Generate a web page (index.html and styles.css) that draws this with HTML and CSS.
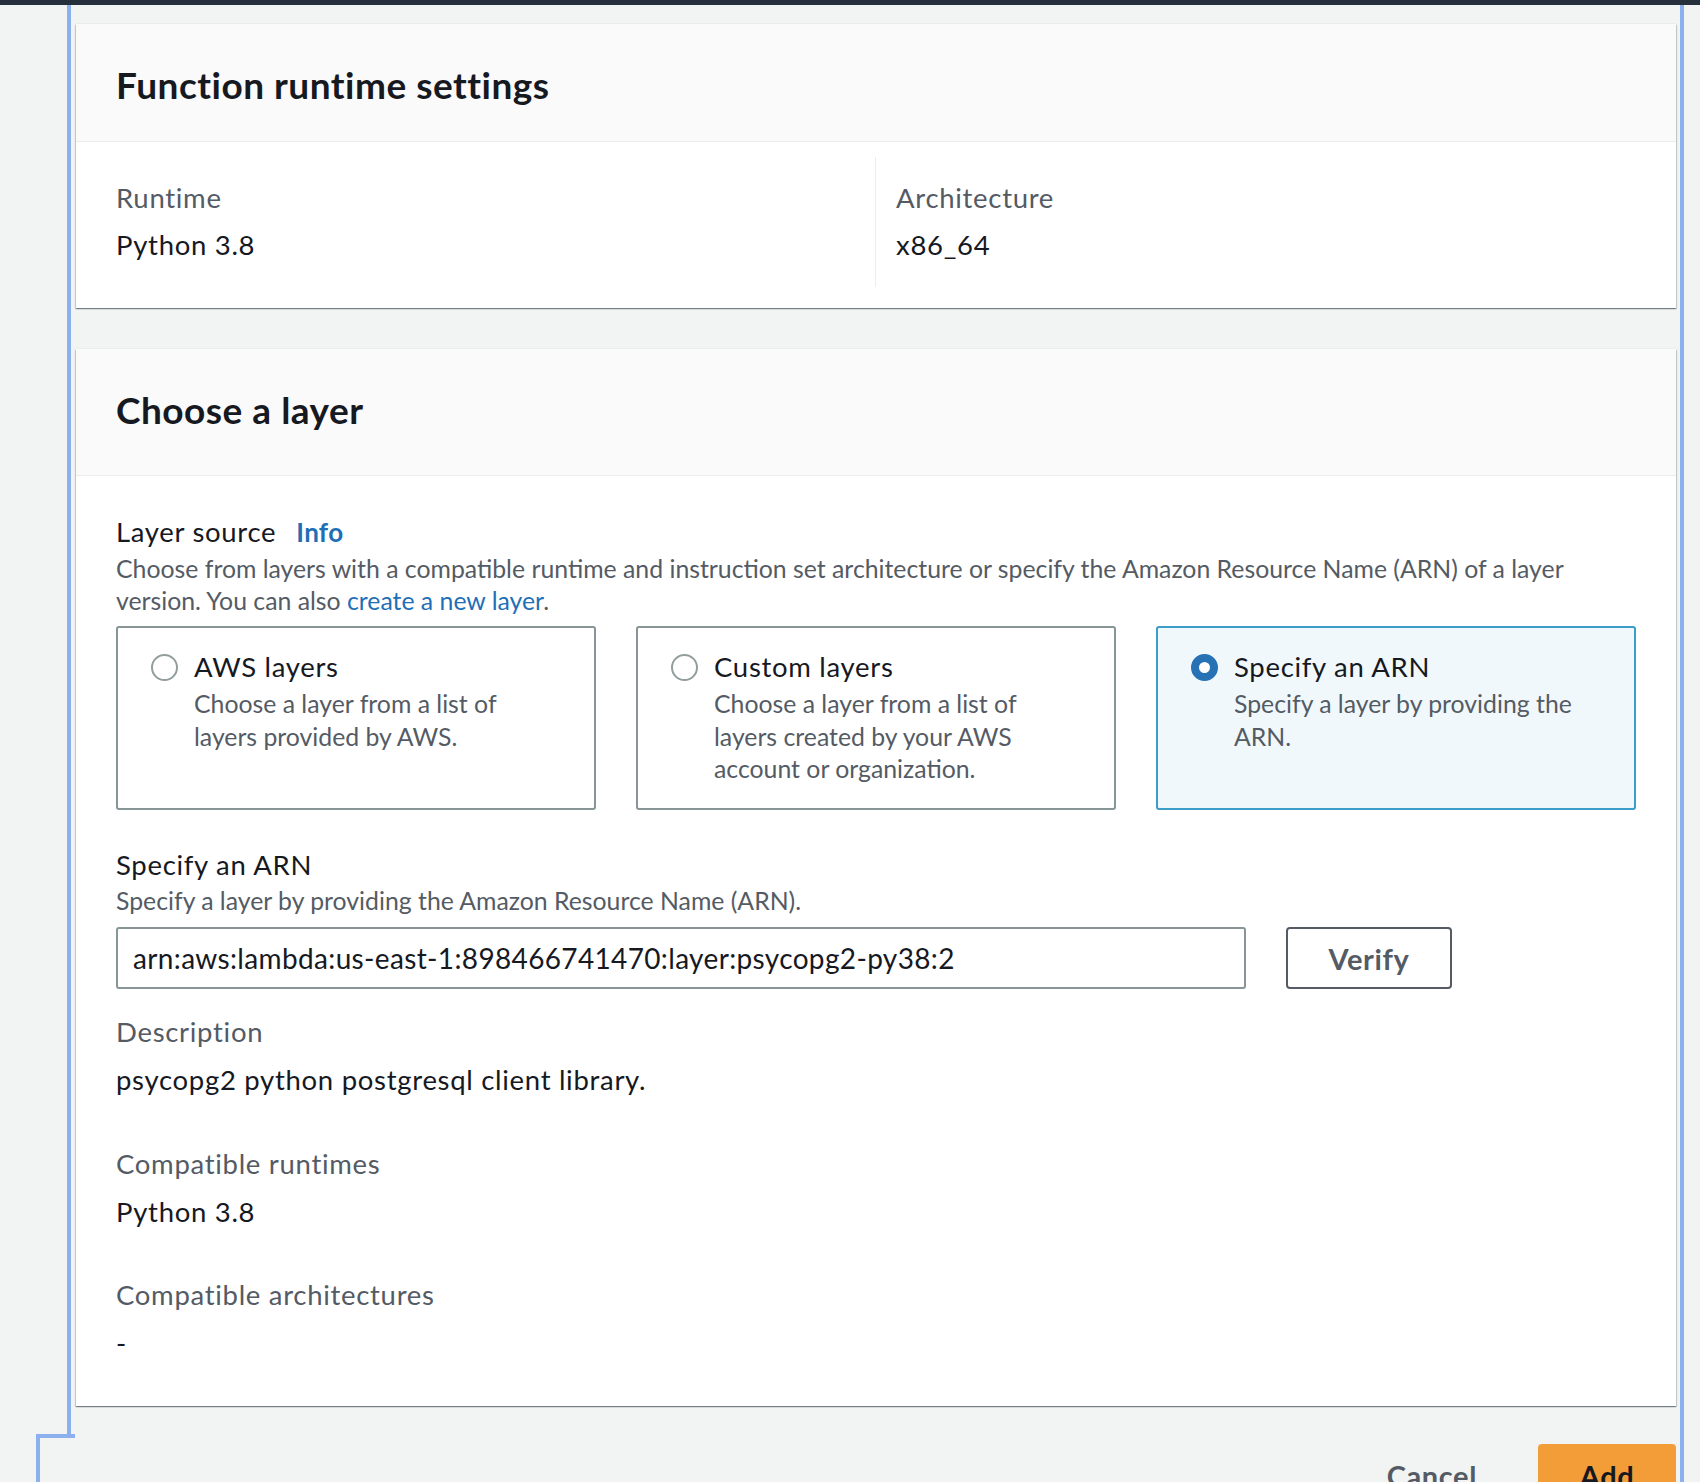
FILE: index.html
```html
<!DOCTYPE html>
<html lang="en">
<head>
<meta charset="utf-8">
<title>Add layer</title>
<link rel="stylesheet" href="styles.css">
</head>
<body>
<div class="topbar"></div>
<div class="frame">
  <section class="card">
    <header class="card-header"><h2>Function runtime settings</h2></header>
    <div class="card-body settings">
      <div class="col">
        <div class="label">Runtime</div>
        <div class="value">Python 3.8</div>
      </div>
      <div class="col">
        <div class="label">Architecture</div>
        <div class="value">x86_64</div>
      </div>
    </div>
  </section>

  <section class="card card-layer">
    <header class="card-header tall"><h2>Choose a layer</h2></header>
    <div class="card-body layer-body">
      <div class="field-label"><span>Layer source</span><a class="info">Info</a></div>
      <p class="desc">Choose from layers with a compatible runtime and instruction set architecture or specify the Amazon Resource Name (ARN) of a layer version. You can also <a class="link">create a new layer</a>.</p>
      <div class="tiles">
        <div class="tile">
          <span class="radio"></span>
          <div class="tile-text">
            <div class="tile-title">AWS layers</div>
            <div class="tile-desc">Choose a layer from a list of layers provided by AWS.</div>
          </div>
        </div>
        <div class="tile">
          <span class="radio"></span>
          <div class="tile-text">
            <div class="tile-title">Custom layers</div>
            <div class="tile-desc">Choose a layer from a list of layers created by your AWS account or organization.</div>
          </div>
        </div>
        <div class="tile selected">
          <span class="radio checked"></span>
          <div class="tile-text">
            <div class="tile-title">Specify an ARN</div>
            <div class="tile-desc">Specify a layer by providing the ARN.</div>
          </div>
        </div>
      </div>

      <div class="field-label arn-label">Specify an ARN</div>
      <p class="desc arn-desc">Specify a layer by providing the Amazon Resource Name (ARN).</p>
      <div class="arn-row">
        <input class="arn-input" type="text" value="arn:aws:lambda:us-east-1:898466741470:layer:psycopg2-py38:2">
        <button class="btn-verify" type="button">Verify</button>
      </div>

      <div class="kv first">
        <div class="label">Description</div>
        <div class="value">psycopg2 python postgresql client library.</div>
      </div>
      <div class="kv">
        <div class="label">Compatible runtimes</div>
        <div class="value">Python 3.8</div>
      </div>
      <div class="kv last">
        <div class="label">Compatible architectures</div>
        <div class="value">-</div>
      </div>
    </div>
  </section>
</div>
<div class="frame-bottom">
  <div class="actions">
    <button class="btn-cancel" type="button">Cancel</button>
    <button class="btn-add" type="button">Add</button>
  </div>
</div>
</body>
</html>
```

FILE: styles.css
```css
* { box-sizing: border-box; }

html, body {
  margin: 0;
  padding: 0;
}

body {
  background: #f2f3f3;
  font-family: "Lato", "Open Sans", sans-serif;
  font-size: 27.5px;
  letter-spacing: 0.7px;
  line-height: 32px;
  color: #16191f;
  overflow: hidden;
}

.topbar {
  height: 5px;
  background: #262f3c;
}

.frame {
  margin-left: 67px;
  width: 1617px;
  border-left: 4px solid #8cafee;
  border-right: 4px solid #8cafee;
  padding: 19px 4px 28px 5px;
}

.card {
  background: #ffffff;
  box-shadow: 0 1px 1px 0 rgba(0, 28, 36, 0.35), 1px 1px 1px 0 rgba(0, 28, 36, 0.15), -1px 1px 1px 0 rgba(0, 28, 36, 0.15), 0 -1px 0 0 #eaeded;
}

.card-layer {
  margin-top: 41px;
}

.card-header {
  background: #fafafa;
  border-bottom: 1px solid #eaeded;
  padding: 39px 40px 35px;
}

.card-header.tall {
  padding-bottom: 44px;
}

.card-header h2 {
  margin: 0;
  font-size: 37px;
  letter-spacing: 0.5px;
  line-height: 43px;
  font-weight: 700;
  color: #16191f;
}

.card-body {
  padding: 0 40px;
}

.settings {
  display: grid;
  grid-template-columns: 1fr 1fr;
  padding-top: 15px;
  padding-bottom: 21px;
}

.settings .col {
  padding: 25px 0 26px;
}

.settings .col:first-child {
  border-right: 1px solid #eaeded;
}

.settings .col + .col {
  padding-left: 20px;
}

.label {
  color: #545b64;
}

.value {
  margin-top: 15px;
  color: #16191f;
}

.layer-body {
  padding-top: 40px;
  padding-bottom: 47px;
}

.field-label {
  display: flex;
  align-items: baseline;
  gap: 20px;
  color: #16191f;
}

.info {
  color: #1f6fb6;
  font-weight: 700;
  font-size: 26px;
  letter-spacing: 0.3px;
}

.desc {
  margin: 5px 0 0;
  font-size: 24.8px;
  letter-spacing: 0;
  line-height: 31.5px;
  color: #545b64;
}

.link {
  color: #1f6fb6;
}

.tiles {
  margin-top: 10px;
  display: grid;
  grid-template-columns: repeat(3, 1fr);
  gap: 40px;
}

.tile {
  display: flex;
  align-items: flex-start;
  gap: 16px;
  border: 2px solid #879596;
  border-radius: 3px;
  padding: 23px 30px 22px 33px;
  background: #ffffff;
}

.tile.selected {
  border-color: #3d9dc9;
  background: #f1f8fc;
}

.radio {
  flex: none;
  width: 27px;
  height: 27px;
  margin-top: 2.5px;
  border-radius: 50%;
  border: 2px solid #939d9e;
  background: #ffffff;
}

.radio.checked {
  border: 8px solid #2672b5;
  background: #ffffff;
}

.tile-title {
  color: #16191f;
}

.tile-desc {
  margin-top: 5px;
  font-size: 24.8px;
  letter-spacing: 0;
  line-height: 32.5px;
  color: #545b64;
}

.arn-label {
  margin-top: 39px;
}

.arn-desc {
  margin-top: 4px;
}

.arn-row {
  margin-top: 11px;
  display: flex;
  gap: 40px;
}

.arn-input {
  width: 1130px;
  height: 62px;
  border: 2px solid #879596;
  border-radius: 3px;
  padding: 0 15px;
  font-family: "Lato", "Open Sans", sans-serif;
  font-size: 28px;
  letter-spacing: 0.35px;
  color: #16191f;
  background: #ffffff;
  outline: none;
}

.btn-verify {
  width: 166px;
  height: 62px;
  border: 2px solid #545b64;
  border-radius: 4px;
  background: #ffffff;
  font-family: "Lato", "Open Sans", sans-serif;
  font-size: 29px;
  letter-spacing: 0.6px;
  font-weight: 700;
  color: #545b64;
  padding: 0;
}

.kv {
  margin-top: 52px;
}

.kv.first {
  margin-top: 27px;
}

.kv.last {
  margin-top: 51px;
}

.kv .value {
  margin-top: 16px;
}

.frame-bottom {
  position: relative;
  margin-left: 36px;
  width: 1648px;
  height: 120px;
  border-left: 4px solid #8cafee;
  border-right: 4px solid #8cafee;
  padding: 10px 4px 0 0;
}

.frame-bottom::before {
  content: "";
  position: absolute;
  top: 0;
  left: -4px;
  width: 39px;
  height: 4px;
  background: #8cafee;
  border-top-left-radius: 4px;
}

.actions {
  display: flex;
  justify-content: flex-end;
  gap: 31px;
}

.btn-cancel,
.btn-add {
  height: 62px;
  border-radius: 4px;
  font-family: "Lato", "Open Sans", sans-serif;
  font-size: 29px;
  letter-spacing: 0.6px;
  font-weight: 700;
  line-height: 33px;
}

.btn-cancel {
  border: none;
  background: transparent;
  color: #545b64;
  padding: 0 30px;
}

.btn-add {
  width: 138px;
  border: none;
  background: #f39d38;
  color: #16191f;
  padding: 0;
}
```
